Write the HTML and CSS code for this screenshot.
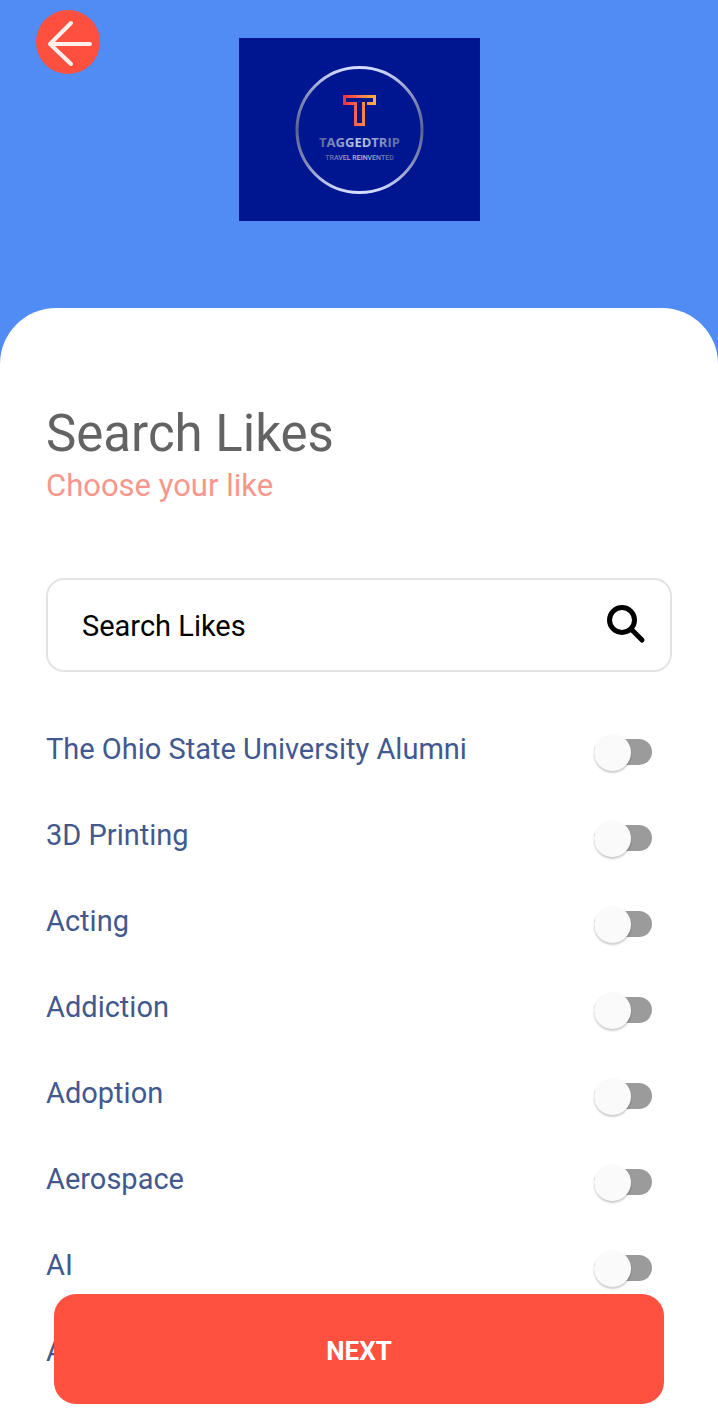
FILE: index.html
```html
<!DOCTYPE html>
<html lang="en">
<head>
    <meta charset="UTF-8">
    <meta name="viewport" content="width=device-width, initial-scale=1.0">
    <title>TaggedTrip - Search Likes</title>
    <link rel="stylesheet" href="styles.css">
</head>
<body>
    <header class="header">
        <button type="button" class="back" aria-label="Back">
            <svg viewBox="0 0 64 64" fill="none" stroke="#fff0ee" stroke-width="4" stroke-linecap="round" stroke-linejoin="round">
                <path d="M54 34H14M35 13L14 34L35 54"/>
            </svg>
        </button>
        <svg class="logo" viewBox="0 0 241 183" role="img" aria-label="TaggedTrip, travel reinvented">
            <defs>
                <linearGradient id="ring" x1="0" y1="0" x2="0" y2="1">
                    <stop offset="0" stop-color="#d5dcff"/>
                    <stop offset="0.25" stop-color="#8088b4"/>
                    <stop offset="0.5" stop-color="#5a6290"/>
                    <stop offset="0.75" stop-color="#8088b4"/>
                    <stop offset="1" stop-color="#d5dcff"/>
                </linearGradient>
                <linearGradient id="mark" x1="0" y1="0" x2="1" y2="0">
                    <stop offset="0" stop-color="#f5333f"/>
                    <stop offset="0.5" stop-color="#f9744f"/>
                    <stop offset="1" stop-color="#fbae3c"/>
                </linearGradient>
                <linearGradient id="silver" x1="0" y1="0" x2="1" y2="0">
                    <stop offset="0" stop-color="#59629f"/>
                    <stop offset="0.5" stop-color="#c3c9e8"/>
                    <stop offset="1" stop-color="#59629f"/>
                </linearGradient>
            </defs>
            <rect width="241" height="183" fill="#001691"/>
            <circle cx="120.500" cy="92" r="62.500" fill="none" stroke="url(#ring)" stroke-width="3"/>
            <path d="M128 65.500H135.500V58.500H105.500V65.500H116.500V86.500H124.500V64" fill="none" stroke="url(#mark)" stroke-width="3"/>
            <text class="logo-name" x="120.500" y="109" text-anchor="middle" fill="url(#silver)">TAGGEDTRIP</text>
            <text class="logo-tag" x="120.500" y="122" text-anchor="middle" fill="url(#silver)">TRAVEL REINVENTED</text>
        </svg>
    </header>

    <main class="card">
        <h1>Search Likes</h1>
        <p class="subtitle">Choose your like</p>

        <form class="search">
            <input type="text" placeholder="Search Likes" aria-label="Search Likes">
            <button type="submit" aria-label="Search">
                <svg viewBox="0 0 40 40" fill="none" stroke="#000" stroke-linecap="round">
                    <circle cx="16" cy="15" r="12.500" stroke-width="5"/>
                    <path d="M26 25L36 35" stroke-width="5"/>
                </svg>
            </button>
        </form>

        <div class="likes">
            <label class="like"><span>The Ohio State University Alumni</span><input type="checkbox" role="switch"></label>
            <label class="like"><span>3D Printing</span><input type="checkbox" role="switch"></label>
            <label class="like"><span>Acting</span><input type="checkbox" role="switch"></label>
            <label class="like"><span>Addiction</span><input type="checkbox" role="switch"></label>
            <label class="like"><span>Adoption</span><input type="checkbox" role="switch"></label>
            <label class="like"><span>Aerospace</span><input type="checkbox" role="switch"></label>
            <label class="like"><span>AI</span><input type="checkbox" role="switch"></label>
            <label class="like"><span>A</span><input type="checkbox" role="switch"></label>
        </div>
    </main>

    <button type="button" class="next">NEXT</button>
</body>
</html>
```
FILE: styles.css
```css
* {
    box-sizing: border-box;
}
body {
    margin: 0;
    font-family: Roboto, sans-serif;
    background: linear-gradient(#508cf4 400px, #fff 400px);
}
button {
    border: none;
    padding: 0;
    font-family: inherit;
    cursor: pointer;
}
svg {
    display: block;
}
.header {
    display: grid;
    grid-template-columns: 1fr auto 1fr;
    align-items: start;
    padding: 10px 36px 87px;
}
.back {
    width: 64px;
    height: 64px;
    border-radius: 50%;
    background: #ff4f3f;
}
.logo {
    width: 241px;
    margin-top: 28px;
}
.logo-name {
    font: 700 13px "Open Sans", sans-serif;
}
.logo-tag {
    font: 500 7px Roboto, sans-serif;
}
.card {
    background: #fff;
    border-radius: 56px 56px 0 0;
    padding: 96px 46px 14px;
}
h1 {
    margin: 0;
    font-size: 51px;
    line-height: 60px;
    font-weight: 400;
    color: #636363;
}
.subtitle {
    margin: 2px 0 0;
    font-size: 31px;
    line-height: 40px;
    color: #f7978c;
}
.search {
    display: flex;
    align-items: center;
    height: 94px;
    margin: 72px 0 37px;
    padding: 0 24px 0 34px;
    border: 2px solid #e4e4e4;
    border-radius: 18px;
}
.search input {
    flex: 1;
    min-width: 0;
    padding: 2px 0 0;
    border: none;
    outline: none;
    background: none;
    font-family: inherit;
    font-size: 29px;
    color: #000;
}
.search input::placeholder {
    color: #000;
    opacity: 1;
}
.search button {
    width: 40px;
    background: none;
}
.like {
    display: flex;
    align-items: center;
    justify-content: space-between;
    height: 86px;
    padding-right: 20px;
    font-size: 29px;
    line-height: 36px;
    color: #41598f;
    cursor: pointer;
}
.like span {
    padding-bottom: 6px;
}
/* switch: grey track with a round thumb on its left end */
.like input {
    appearance: none;
    display: flex;
    align-items: center;
    width: 58px;
    height: 26px;
    margin: 0;
    border-radius: 13px;
    background: #9b9b9b;
    cursor: pointer;
}
.like input::before {
    content: "";
    width: 37px;
    height: 37px;
    flex: none;
    border-radius: 50%;
    background: #fafafa;
    box-shadow: 0 2px 2px rgba(0, 0, 0, 0.2);
}
.like input:checked {
    justify-content: flex-end;
    background: #ff9a90;
}
.next {
    position: fixed;
    left: 54px;
    right: 54px;
    bottom: 7px;
    height: 110px;
    padding-top: 4px;
    border-radius: 22px;
    background: #ff5040;
    color: #fff;
    font-size: 26px;
    font-weight: 700;
}
```
